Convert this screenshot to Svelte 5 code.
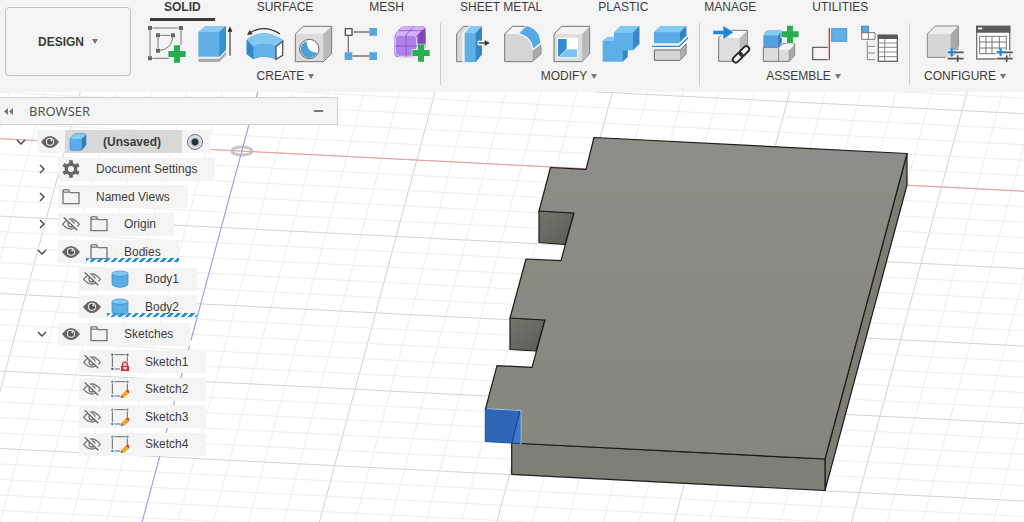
<script lang="ts">
	const tabs = ['SOLID', 'SURFACE', 'MESH', 'SHEET METAL', 'PLASTIC', 'MANAGE', 'UTILITIES'];
	let activeTab = $state('SOLID');

	const groups = [
		{ name: 'CREATE', tools: ['sketch', 'extrude', 'revolve', 'hole', 'pattern', 'form'] },
		{ name: 'MODIFY', tools: ['press-pull', 'fillet', 'shell', 'combine', 'split'] },
		{ name: 'ASSEMBLE', tools: ['insert', 'component', 'joint', 'bom'] },
		{ name: 'CONFIGURE', tools: ['configure', 'configuration-table'] }
	];

	type Item = {
		name: string;
		level: number;
		icon: string;
		open?: boolean;
		visible?: boolean;
		marked?: boolean;
	};

	let items: Item[] = $state([
		{ name: '(Unsaved)', level: 0, icon: 'cube', open: true, visible: true },
		{ name: 'Document Settings', level: 1, icon: 'gear', open: false },
		{ name: 'Named Views', level: 1, icon: 'folder', open: false },
		{ name: 'Origin', level: 1, icon: 'folder', open: false, visible: false },
		{ name: 'Bodies', level: 1, icon: 'folder', open: true, visible: true, marked: true },
		{ name: 'Body1', level: 2, icon: 'body', visible: false },
		{ name: 'Body2', level: 2, icon: 'body', visible: true, marked: true },
		{ name: 'Sketches', level: 1, icon: 'folder', open: true, visible: true },
		{ name: 'Sketch1', level: 2, icon: 'sketch-locked', visible: false },
		{ name: 'Sketch2', level: 2, icon: 'sketch-edit', visible: false },
		{ name: 'Sketch3', level: 2, icon: 'sketch-edit', visible: false },
		{ name: 'Sketch4', level: 2, icon: 'sketch-edit', visible: false }
	]);

	// Ground grid, every fifth line is a major one
	const columns = Array.from({ length: 36 }, (_, n) => n - 9).map((i) => ({
		x: 257.7 + 35.47 * i,
		major: i % 5 === 0
	}));
	const rows = Array.from({ length: 34 }, (_, n) => n - 8).map((j) => ({
		y: 138.7 + 15.49 * j,
		major: j % 5 === 0
	}));
</script>

{#snippet plus(x: number, y: number)}
	<path
		transform="translate({x} {y})"
		d="M-9-26H9V-9H26V9H9V26H-9V9H-26V-9H-9Z"
		fill="#27ae50"
		stroke="#f4f4f4"
		stroke-width="4"
		paint-order="stroke"
	/>
{/snippet}

{#snippet sliders()}
	<path d="M66 88H116M66 107H116" stroke="#f4f4f4" stroke-width="12" />
	<path d="M70 88H116M68 107H116M98 97V117" stroke="#555" stroke-width="5" />
	<path d="M68 88H92M80 76V100" stroke="#1b87dc" stroke-width="6" />
{/snippet}

{#snippet toolIcon(name: string)}
	<svg class="tool-icon" viewBox="0 0 120 120" fill="none" aria-hidden="true">
		{#if name === 'sketch'}
			<path d="M16 15H95M9 22V99M102 22V66M16 106H66M40 37H71M33 44V76M78 37Q76 80 33 83" stroke="#777" stroke-width="3" />
			<path d="M3 9h12v12H3zM96 9h12v12H96zM3 100h12v12H3zM27 31h12v12H27zM72 31h12v12H72zM27 77h12v12H27z" fill="#666" />
			{@render plus(90, 93)}
		{:else if name === 'extrude'}
			<path d="M7 107H70L90 86V96L70 117H7Z" fill="#aaa" />
			<path d="M7 27L28 9H90V80L70 101H7Z" fill="#62aee6" />
			<path d="M7 27L28 9H90L70 27Z" fill="#8ccbf4" />
			<path d="M90 9V80L70 101V27Z" fill="#3a8fce" />
			<path d="M102 98V20" stroke="#222" stroke-width="3" />
			<path d="M102 10L109 26H95Z" fill="#222" />
		{:else if name === 'revolve'}
			<path d="M105 33Q58 2 14 30" stroke="#333" stroke-width="4" />
			<path d="M6 36L14 21L23 34Z" fill="#333" />
			<path d="M5 50Q58 10 115 52L112 99L92 109Q58 94 25 109L5 93Z" fill="#4a9fdd" />
			<path d="M5 50Q58 10 115 52L92 70Q58 56 25 71Z" fill="#82c6f2" />
			<path d="M25 71Q58 56 92 70V109Q58 94 25 109Z" fill="#62b1e8" />
			<path d="M5 50L25 71V109L5 93Z" fill="#3589c8" />
			<path d="M93 71L113 55V97L93 109Z" fill="#fff" stroke="#555" stroke-width="4" />
		{:else if name === 'hole'}
			<path d="M4 33L28 10H113V92L88 116H4Z" fill="#dcdcdc" stroke="#777" stroke-width="3" />
			<path d="M7 32L29 12H110L88 32Z" fill="#f0f0f0" />
			<path d="M88 33L111 12V91L88 114Z" fill="#b9b9b9" />
			<circle cx="46" cy="78" r="29" fill="#fff" stroke="#666" stroke-width="3" />
			<path d="M38 54A26 26 0 1 0 70 89Q39 89 38 54Z" fill="#4f9fd9" />
		{:else if name === 'pattern'}
			<path d="M32 27H78M16 40V87M28 99H78" stroke="#777" stroke-width="4" />
			<rect x="7" y="17" width="20" height="20" fill="#fff" stroke="#555" stroke-width="4" />
			<path d="M79 15h23v23H79zM5 88h23v23H5zM79 88h23v23H79z" fill="#55a7e2" />
		{:else if name === 'form'}
			<path d="M7 43Q7 33 28 13Q34 9 43 9H88Q101 9 101 22V68Q101 78 79 98Q75 103 66 103H20Q7 103 7 91Z" fill="#a574dc" />
			<path d="M9 37L28 14Q34 10 43 10H88Q95 10 98 16L77 37Q45 32 9 37Z" fill="#d4b1fa" />
			<path d="M77 36Q97 15 99 17Q103 60 97 75L77 98Z" fill="#7e49b8" />
			<rect x="10" y="36" width="64" height="64" rx="13" fill="#b07fe8" stroke="#d8bbfb" stroke-width="4" />
			<path d="M42 36V102M8 69H77L101 46M42 36L65 10M20 23H91V84" stroke="#7745ac" stroke-width="2" />
			{@render plus(87, 90)}
		{:else if name === 'press-pull'}
			<path d="M5 33L25 10H50V116H5Z" fill="#d8d8d8" stroke="#777" stroke-width="3" />
			<path d="M22 30L43 8H50V118H22Z" fill="#f4f4f4" />
			<path d="M29 31L47 10H81V94L62 117H29Z" fill="#60b0e8" />
			<path d="M29 31L47 10H81L62 31Z" fill="#83c9f5" />
			<path d="M62 31L81 10V94L62 117Z" fill="#3387c4" />
			<path d="M68 60H98" stroke="#f4f4f4" stroke-width="14" />
			<path d="M71 60H94" stroke="#333" stroke-width="4" />
			<path d="M105 60L89 52V68Z" fill="#333" />
		{:else if name === 'fillet'}
			<path d="M2 33L25 10H62Q108 18 111 78V93L85 116H2Z" fill="#d5d5d5" stroke="#777" stroke-width="3" />
			<path d="M5 33L26 12H60L40 33Z" fill="#f4f4f4" />
			<path d="M86 78L109 65V92L86 113Z" fill="#aaa" />
			<path d="M40 34L64 9Q108 13 111 64L85 84Q82 44 40 34Z" fill="#f4f4f4" />
			<path d="M47 31L67 9Q107 19 109 59L88 76Q84 43 47 31Z" fill="#55a9e4" />
		{:else if name === 'shell'}
			<path d="M3 33L26 10H110V92L87 116H3Z" fill="#ddd" stroke="#777" stroke-width="3" />
			<path d="M6 33L27 12H107L86 33Z" fill="#f2f2f2" />
			<path d="M87 34L108 13V91L87 113Z" fill="#bbb" />
			<rect x="12" y="44" width="63" height="62" fill="#fff" />
			<path d="M15 48H41V78L15 103Z" fill="#348bce" />
			<path d="M42 79H72V103H17Z" fill="#7cc3f2" />
		{:else if name === 'combine'}
			<path d="M2 54L17 42H36V29L55 10H112V62L93 82H77V101L62 116H2Z" fill="#5dafe8" />
			<path d="M36 29L55 10H112L93 29ZM2 54L17 42H36V54Z" fill="#82c8f5" />
			<path d="M93 29L112 10V62L93 82ZM77 82V101L62 116V82Z" fill="#3688c7" />
		{:else if name === 'split'}
			<path d="M9 28L28 10H106V43L87 61H9Z" fill="#5aabe4" />
			<path d="M9 28L28 10H106L87 28Z" fill="#82caf5" />
			<path d="M87 28L106 10V43L87 61Z" fill="#3384c1" />
			<path d="M10 81H87L105 63V92L87 112H10Z" fill="#d5d5d5" stroke="#666" stroke-width="3" />
			<path d="M87 81L103 65V90L87 109Z" fill="#aaa" />
			<path d="M3 70H85L110 44" stroke="#f4f4f4" stroke-width="14" />
			<path d="M3 70H85L111 44" stroke="#2b8ad0" stroke-width="4" />
		{:else if name === 'insert'}
			<path d="M14 44L36 22H100V92L77 115H14Z" fill="#dedede" stroke="#777" stroke-width="3" />
			<path d="M17 45L37 24H97L77 45Z" fill="#f8f8f8" />
			<path d="M77 46L98 25V91L77 112Z" fill="#bbb" />
			<path d="M-4 20H24V6L62 28L24 51V37H-4Z" fill="#f4f4f4" />
			<path d="M-2 23H28V9L58 28L28 48V34H-2Z" fill="#1b87dc" />
			<g transform="translate(81 94) rotate(-45)">
				<rect x="-34" y="-14" width="68" height="28" rx="14" fill="#f4f4f4" />
				<rect x="-31" y="-9" width="34" height="18" rx="9" stroke="#2b2b2b" stroke-width="6" />
				<rect x="-3" y="-9" width="34" height="18" rx="9" stroke="#2b2b2b" stroke-width="6" />
			</g>
		{:else if name === 'component'}
			<path d="M1 73H47L59 62H95V97L79 115H1Z" fill="#dcdcdc" stroke="#777" stroke-width="3" />
			<path d="M47 74V115M79 81V115" stroke="#888" stroke-width="3" />
			<path d="M48 78L62 64H94L79 80H48Z" fill="#f5f5f5" />
			<path d="M80 81L94 66V96L80 113Z" fill="#aaa" />
			<path d="M1 39Q7 21 20 21H56V59L45 73H1Z" fill="#559fe0" />
			<path d="M3 37Q10 22 20 21H56L45 38Z" fill="#83caf5" />
			<path d="M46 38L56 24V59L46 73Z" fill="#347fc0" />
			{@render plus(81, 34)}
		{:else if name === 'joint'}
			<path d="M47 110H2V73H47" stroke="#666" stroke-width="4" />
			<rect x="59" y="17" width="45" height="38" fill="#62aee5" stroke="#4e99d2" stroke-width="3" />
			<path d="M52 15V112" stroke="#e03038" stroke-width="4" />
		{:else if name === 'bom'}
			<rect x="2" y="10" width="20" height="19" fill="#5ba9e1" stroke="#3984bd" stroke-width="3" />
			<path d="M2 29H42V49H2ZM22 29V49" fill="#fff" stroke="#777" stroke-width="3" />
			<path d="M19 55V110H42M19 70H42M19 90H42" stroke="#888" stroke-width="3" />
			<rect x="52" y="37" width="57" height="78" fill="#fff" stroke="#666" stroke-width="4" />
			<path d="M50 35H110V48H50Z" fill="#5a5a5a" />
			<path d="M52 60H109M52 73H109M52 87H109M52 101H109M71 47V115" stroke="#888" stroke-width="3" />
		{:else if name === 'configure'}
			<path d="M7 33L31 9H100V92L77 103H7Z" fill="#d6d6d6" />
			<path d="M7 33L31 9H100L77 33Z" fill="#eee" />
			<path d="M77 33L100 9V86L77 103Z" fill="#aaa" />
			<path d="M7 33L31 9H100V70M7 33V103H62" stroke="#888" stroke-width="3" />
			{@render sliders()}
		{:else if name === 'configuration-table'}
			<path d="M8 10H107V108H8Z" fill="#fff" stroke="#777" stroke-width="4" />
			<path d="M6 8H109V29H6Z" fill="#5a5a5a" />
			<path d="M12 14H25V19H12Z" fill="#fff" />
			<path d="M17 40H97V92H17ZM17 57H97M17 75H97M36 40V92M54 40V92M76 40V92" stroke="#777" stroke-width="3" />
			{@render sliders()}
		{/if}
	</svg>
{/snippet}

{#snippet eye(visible: boolean)}
	<svg class="eye" viewBox="0 0 54 42" fill="none" aria-hidden="true">
		{#if visible}
			<path d="M0 21Q27-15 54 21Q27 57 0 21Z" fill="#666" />
			<circle cx="27" cy="20" r="12" fill="#f4f4f4" />
			<circle cx="27" cy="20" r="9" fill="#555" />
			<circle cx="31" cy="16" r="3" fill="#f4f4f4" />
		{:else}
			<path d="M2 22Q27-10 52 22Q27 50 2 22Z" stroke="#777" stroke-width="4" />
			<circle cx="27" cy="21" r="9" stroke="#777" stroke-width="4" />
			<path d="M10 1L50 38" stroke="#f4f4f4" stroke-width="7" />
			<path d="M5 1L46 40" stroke="#666" stroke-width="4" />
		{/if}
	</svg>
{/snippet}

{#snippet itemIcon(name: string)}
	<svg class="item-icon" viewBox="0 0 54 54" fill="none" aria-hidden="true">
		{#if name === 'cube'}
			<path d="M3 18Q4 14 15 5Q18 2 24 2H44Q51 2 51 8V36L39 50Q37 52 32 52H8Q3 52 3 47Z" fill="#5baee8" />
			<path d="M4 17L16 4Q18 2 24 2H44Q50 2 51 7L38 17Z" fill="#8ad0f8" />
			<path d="M38 17L51 6V36L38 51Z" fill="#2e80bd" />
			<path d="M3 18Q4 14 15 5Q18 2 24 2H44Q51 2 51 8V36L39 50Q37 52 32 52H8Q3 52 3 47Z" stroke="#3f88bb" stroke-width="2" />
		{:else if name === 'gear'}
			<g stroke="#666" stroke-width="11">
				<path d="M27 1V13M27 41V53M4 14L15 20M39 34L50 40M4 40L15 34M39 20L50 14" />
			</g>
			<circle cx="27" cy="27" r="14" stroke="#666" stroke-width="10" />
		{:else if name === 'folder'}
			<path d="M3 8H20L25 14H51V47H3Z" stroke="#777" stroke-width="4" />
			<path d="M4 5H21V13H4Z" fill="#ccc" stroke="#777" stroke-width="3" />
		{:else if name === 'body'}
			<path d="M3 11V44Q10 52 27 52T51 44V11Z" fill="#5dade5" stroke="#3b8dc8" stroke-width="2" />
			<ellipse cx="27" cy="11" rx="24" ry="8" fill="#7fcaf5" stroke="#3b8dc8" stroke-width="2" />
		{:else}
			<path d="M11 5H43M4 11V42M49 11V28M11 48H28" stroke="#666" stroke-width="3" />
			<path
				d="M1 2h6v6H1zM46 2h6v6h-6zM1 45h6v6H1z"
				fill={name === 'sketch-edit' ? '#288bdc' : '#555'}
			/>
			{#if name === 'sketch-edit'}
				<path d="M32 45L47 31L54 38L39 52Z" fill="#f7a51d" stroke="#f7a51d" stroke-width="3" />
				<path d="M45 32L49 28Q56 31 56 37L53 40Z" fill="#dc3640" />
				<path d="M31 45L39 52L28 55Z" fill="#777" />
			{:else}
				<path d="M28 26H56V56H28Z" fill="#f4f4f4" />
				<path d="M30 38H55V55H30Z" fill="#d02f3d" />
				<path d="M35 38V31Q42 23 49 31V38" stroke="#d02f3d" stroke-width="4" />
				<path d="M37 43H48V47H44V51H41V47H37Z" fill="#fff" />
			{/if}
		{/if}
	</svg>
{/snippet}

<div class="app">
	<header class="toolbar">
		<button class="workspace-btn">DESIGN <span class="caret"></span></button>
		<div class="ribbon">
			<nav class="tabs">
				{#each tabs as tab}
					<button class="tab" class:active={tab === activeTab} onclick={() => (activeTab = tab)}>
						{tab}
					</button>
				{/each}
			</nav>
			<div class="groups">
				{#each groups as group}
					<section class="group">
						<div class="tools">
							{#each group.tools as tool}
								<button class="tool" aria-label={tool}>{@render toolIcon(tool)}</button>
							{/each}
						</div>
						<button class="group-label">{group.name}<span class="caret"></span></button>
					</section>
				{/each}
			</div>
		</div>
	</header>

	<main class="workspace">
		<svg class="canvas" viewBox="0 92 1024 430" preserveAspectRatio="xMinYMin slice" aria-hidden="true">
			<defs>
				<linearGradient id="top-face" x1="0" y1="0" x2="0" y2="1">
					<stop offset="0" stop-color="#8e8e88" />
					<stop offset="1" stop-color="#86867e" />
				</linearGradient>
				<linearGradient id="notch-face" x1="0" y1="0" x2="1" y2="1">
					<stop offset="0" stop-color="#75756e" />
					<stop offset="1" stop-color="#5c5c57" />
				</linearGradient>
			</defs>

			{#each columns as column}
				<path class="grid-line" class:major={column.major} d="M{column.x} 92L{column.x - 115.6} 522" />
			{/each}
			{#each rows as row}
				<path class="grid-line" class:major={row.major} d="M0 {row.y}L1024 {row.y + 52.5}" />
			{/each}

			<ellipse cx="242" cy="151" rx="10" ry="4" fill="none" stroke="#c9c5c5" stroke-width="3" />
			<path d="M0 138.7L1024 191.2" stroke="#f29a9b" />
			<path d="M257.7 92L142.1 522" stroke="#9a97f3" />

			<g stroke="#1c1c1a" stroke-width="1.2" stroke-linejoin="round">
				<path d="M539 211L574 213L565 244.5L539 242.5Z" fill="url(#notch-face)" />
				<path d="M510 318L545 320L536 351L510 349.5Z" fill="url(#notch-face)" />
				<path d="M907 153.5V185L825 490.5V459Z" fill="#7e7c74" />
				<path d="M511.7 443V474.3L825 490.5V459Z" fill="#7f7f77" />
				<path
					d="M594 137.5L907 153.5L825 459L511.7 443L520.5 411L485.5 409L497 365.7L532 367.3L545 320L510 318L526 259L561 260.7L574 213L539 211L550.5 167.5L586 169.3Z"
					fill="url(#top-face)"
				/>
			</g>
			<path d="M485.3 409L520.7 410.5V443.5L485.3 441.5Z" fill="#3066b8" stroke="#1a4f9c" />
			<path d="M520 411L512 442.5L520 443Z" fill="#3f78cc" />
			<path d="M520 411L512 442.5" stroke="#163f7d" />
			<path d="M487 408.7L521 410.5V444" fill="none" stroke="#aecbee" />
		</svg>

		<aside class="browser">
			<div class="browser-head">
				<button class="collapse" aria-label="Collapse browser">
					<svg viewBox="0 0 9 7" width="9" height="7"><path d="M4 0V7L0 3.5ZM9 0V7L5 3.5Z" fill="#777" /></svg>
				</button>
				<h2>BROWSER</h2>
				<button class="minimize" aria-label="Minimize browser"></button>
			</div>
			<ul class="tree">
				{#each items as item}
					<li class="row level-{item.level}">
						{#if item.open !== undefined}
							<button class="chevron" class:open={item.open} aria-label="Toggle {item.name}" onclick={() => (item.open = !item.open)}>
								<svg viewBox="0 0 10 10" width="10" height="10"><path d="M3 1L7 5L3 9" fill="none" stroke="#444" stroke-width="1.4" /></svg>
							</button>
						{/if}
						<div class="chip">
							{#if item.visible !== undefined}
								<button class="eye-btn" aria-label="Show or hide {item.name}" onclick={() => (item.visible = !item.visible)}>
									{@render eye(item.visible)}
								</button>
							{/if}
							<span class="item" class:root={item.level === 0} class:marked={item.marked}>
								{@render itemIcon(item.icon)}
								<span class="name">{item.name}</span>
							</span>
							{#if item.level === 0}
								<input type="radio" name="active-component" aria-label="Activate component" checked />
							{/if}
						</div>
					</li>
				{/each}
			</ul>
		</aside>
	</main>
</div>

<style>
	:global(body) {
		margin: 0;
	}

	.app {
		display: flex;
		flex-direction: column;
		min-height: 100vh;
		overflow: hidden;
		background: #fff;
		color: #3c3c3c;
		font-family: 'Liberation Sans', Arial, sans-serif;
		font-size: 12px;
	}

	button {
		padding: 0;
		border: none;
		background: none;
		color: inherit;
		font: inherit;
		cursor: pointer;
	}

	svg {
		display: block;
	}

	/* Toolbar */
	.toolbar {
		display: flex;
		align-items: flex-start;
		height: 92px;
		background: #f4f4f4;
	}

	.workspace-btn {
		display: flex;
		flex: none;
		align-items: center;
		justify-content: center;
		gap: 8px;
		width: 126px;
		height: 69px;
		margin: 7px 16px 0 5px;
		border: 1px solid #c2c2c2;
		border-radius: 4px;
		font-weight: 700;
	}

	.caret {
		border: 3px solid transparent;
		border-top: 5px solid #777;
		border-bottom: none;
	}

	.ribbon {
		flex: 1;
		min-width: 0;
	}

	.tabs {
		display: flex;
		gap: 28px;
		padding-left: 3px;
	}

	.tab {
		height: 21px;
		padding: 0 14px 4px;
		border-bottom: 3px solid transparent;
		line-height: 14px;
		white-space: nowrap;
	}

	.tab.active {
		border-bottom-color: #3c3c3c;
		font-weight: 700;
	}

	.groups {
		display: flex;
		padding-top: 2px;
	}

	.group {
		display: flex;
		flex-direction: column;
		align-items: center;
		padding-right: 8px;
		padding-bottom: 1px;
	}

	.group + .group {
		padding-left: 14px;
		border-left: 1px solid #ccc;
	}

	.tools {
		display: flex;
		gap: 9px;
	}

	.tool-icon {
		width: 40px;
		height: 40px;
		overflow: visible;
	}

	.group-label {
		display: flex;
		align-items: center;
		gap: 4px;
		height: 16px;
		margin-top: 5px;
		padding-right: 8px;
	}

	/* Workspace */
	.workspace {
		position: relative;
		flex: 1;
	}

	.canvas {
		position: absolute;
		inset: 0;
		width: 100%;
		height: 100%;
	}

	.grid-line {
		stroke: #eee;
	}

	.grid-line.major {
		stroke: #d2d2d2;
	}

	/* Browser panel */
	.browser {
		position: relative;
		width: 33%;
		min-width: 260px;
		padding-top: 5px;
	}

	.browser-head {
		display: flex;
		align-items: center;
		box-sizing: border-box;
		height: 28px;
		padding: 0 14px 0 4px;
		border: 1px solid #d0d0d0;
		border-left: none;
		background: #f4f4f4;
	}

	h2 {
		flex: 1;
		margin: 0 0 0 16px;
		color: #555;
		font-family: 'Noto Sans', sans-serif;
		font-size: 13px;
		font-weight: 400;
		line-height: 20px;
	}

	.minimize {
		width: 9px;
		height: 2px;
		background: #777;
	}

	.tree {
		display: grid;
		grid-auto-rows: 1fr;
		height: 330px;
		margin: 3px 0 0;
		padding: 0;
		list-style: none;
	}

	.row {
		display: flex;
		align-items: center;
	}

	.level-0 {
		padding-left: 16px;
	}

	.level-1 {
		padding-left: 37px;
	}

	.level-2 {
		padding-left: 79px;
	}

	.chevron {
		width: 10px;
		height: 10px;
		margin-right: 11px;
	}

	.chevron.open {
		transform: rotate(90deg);
	}

	.chip {
		display: flex;
		align-items: center;
		height: 23px;
		padding-left: 4px;
		background: #f4f4f4;
	}

	.eye-btn {
		margin-right: 6px;
	}

	.eye {
		width: 18px;
		height: 14px;
	}

	.item {
		position: relative;
		display: flex;
		align-items: center;
		gap: 16px;
		height: 23px;
		padding-right: 18px;
	}

	.eye-btn + .item {
		padding-left: 4px;
	}

	.item-icon {
		width: 18px;
		height: 18px;
	}

	.item.root {
		padding-right: 21px;
		background: #d8d8d8;
		font-weight: 700;
	}

	.item.marked::after {
		content: '';
		position: absolute;
		right: 0;
		bottom: 1px;
		left: 0;
		height: 4px;
		background: repeating-linear-gradient(135deg, #1b8fd2 0 2px, transparent 3px 5px);
	}

	input[type='radio'] {
		appearance: none;
		width: 16px;
		height: 16px;
		margin: 0 8px 0 5px;
		border: 1px solid #6b7078;
		border-radius: 50%;
		background: radial-gradient(circle, #292e38 0 3px, #c5cbd6 4px, #e6e9ef 7px);
	}
</style>
